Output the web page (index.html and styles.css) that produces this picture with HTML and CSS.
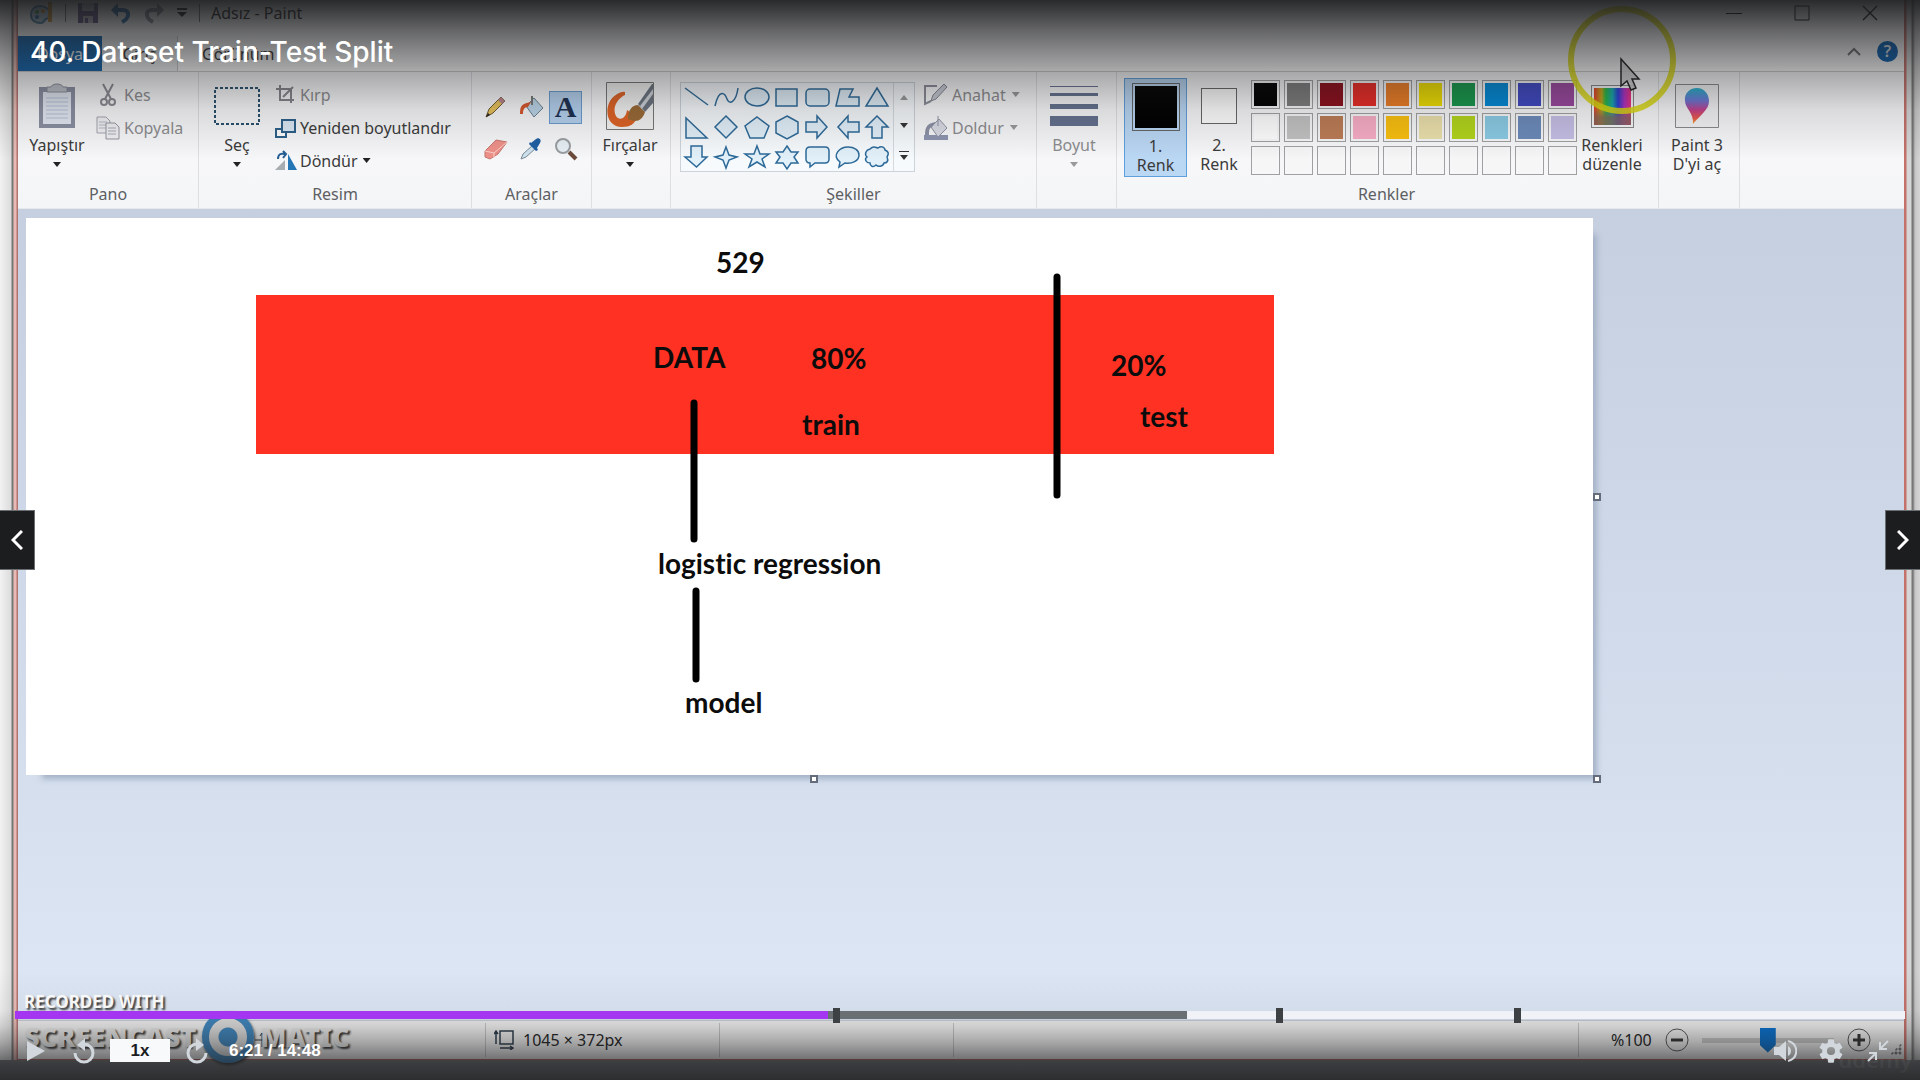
FILE: index.html
```html
<!DOCTYPE html>
<html lang="tr">
<head>
<meta charset="utf-8">
<title>40. Dataset Train-Test Split</title>
<link rel="stylesheet" href="styles.css">
</head>
<body>
<main class="player">
  <div class="edge edge-left"></div>
  <section class="window">
    <header class="titlebar">
      <svg class="app-icon" width="24" height="24" viewBox="0 0 24 24"><path d="M10 5C4 5 1 9 1 14s4 8 10 8c3 0 3-3 5-4s5-1 5-4-4-9-11-9z" fill="#b9d6ea" stroke="#4d86ab" stroke-width="2"/><circle cx="7" cy="11" r="2" fill="#3f9b4c"/><circle cx="13" cy="10" r="2" fill="#d38a2c"/><circle cx="7" cy="16" r="2" fill="#2b6fb0"/><path d="M20 1v20" stroke="#d99b3a" stroke-width="4"/></svg>
      <span class="bar-sep"></span>
      <button class="tool" aria-label="Kaydet"><svg width="22" height="22" viewBox="0 0 22 22"><path d="M1 1h20v20H1z" fill="#6a5a8e"/><path d="M5 1h12v8H5zM6 14h10v7H6z" fill="#c9c6d6"/><path d="M8 16h3v5H8z" fill="#6a5a8e"/></svg></button>
      <button class="tool" aria-label="Geri al"><svg width="22" height="22" viewBox="0 0 22 22"><path d="M4 8h9c7 0 7 8-1 12" fill="none" stroke="#2f73b5" stroke-width="4"/><path d="M1 8l7-7v14z" fill="#2f73b5"/></svg></button>
      <button class="tool" aria-label="Yinele"><svg width="22" height="22" viewBox="0 0 22 22"><path d="M18 8H9C2 8 2 16 10 20" fill="none" stroke="#8f949d" stroke-width="4"/><path d="M21 8l-7-7v14z" fill="#8f949d"/></svg></button>
      <button class="tool narrow" aria-label="Özelleştir"><svg width="12" height="10" viewBox="0 0 12 10"><path d="M1 1h10" stroke="#222" stroke-width="2"/><path d="M1 4h10L6 9z" fill="#222"/></svg></button>
      <span class="bar-sep"></span>
      <span class="app-title">Adsız - Paint</span>
      <div class="window-buttons">
        <button aria-label="Simge durumuna küçült"><svg width="16" height="16"><path d="M0 8.500h16" stroke="#111"/></svg></button>
        <button aria-label="Ekranı kapla"><svg width="16" height="16"><path d="M1 1h14v14H1z" fill="none" stroke="#111"/></svg></button>
        <button aria-label="Kapat"><svg width="16" height="16"><path d="M1 1l14 14M15 1L1 15" stroke="#111" stroke-width="1.300"/></svg></button>
      </div>
    </header>
    <nav class="tabs">
      <button class="tab file">Dosya</button>
      <button class="tab active">Giriş</button>
      <button class="tab">Görünüm</button>
      <div class="tab-tools">
        <button aria-label="Şeridi daralt"><svg width="14" height="10"><path d="M1 8l6-6 6 6" fill="none" stroke="#777" stroke-width="2"/></svg></button>
        <button class="help" aria-label="Yardım">?</button>
      </div>
    </nav>
    <div class="ribbon">
      <section class="group pano">
        <div class="group-body">
          <button class="big"><span class="pic"><svg width="38" height="46" viewBox="0 0 38 46"><path d="M1 4h36v41H1z" fill="#8b90a3"/><path d="M5 9h28v32H5z" fill="#e4e9f4"/><path d="M9 4h4c1-4 11-4 12 0h4v5H9z" fill="#c1c5ce" stroke="#8b8e99"/><path d="M8 15h22M8 19h22M8 23h22M8 27h22M8 31h22M8 35h22" stroke="#b9c4da"/></svg></span>Yapıştır<i class="arrow"></i></button>
          <div class="rows">
            <button class="row off"><svg width="24" height="24" viewBox="0 0 24 24"><path d="M7 1l8 15M17 1L9 16" stroke="#8b8b93" stroke-width="2"/><circle cx="8" cy="19" r="3" fill="none" stroke="#8b8b93" stroke-width="2"/><circle cx="16" cy="19" r="3" fill="none" stroke="#8b8b93" stroke-width="2"/></svg>Kes</button>
            <button class="row off"><svg width="24" height="24" viewBox="0 0 24 24"><path d="M1 1h9l4 4v12H1z" fill="#f2f2f5" stroke="#a3a5b0"/><path d="M3 6h8M3 9h8M3 12h8" stroke="#b7bac6"/><path d="M10 7h9l4 4v12H10z" fill="#f2f2f5" stroke="#94969f"/><path d="M12 12h8M12 15h8M12 18h8" stroke="#a7aab8"/></svg>Kopyala</button>
          </div>
        </div>
        <h2>Pano</h2>
      </section>
      <section class="group resim">
        <div class="group-body">
          <button class="big"><span class="pic"><svg width="48" height="40" viewBox="0 0 48 40"><path d="M2 2h44v36H2z" fill="none" stroke="#27506e" stroke-width="2" stroke-dasharray="3 2"/></svg></span>Seç<i class="arrow"></i></button>
          <div class="rows">
            <button class="row off"><svg width="22" height="22" viewBox="0 0 22 22"><path d="M5 1v15h14M1 5h15v14" fill="none" stroke="#85858b" stroke-width="2"/><path d="M8 13L18 3" stroke="#85858b" stroke-width="2"/></svg>Kırp</button>
            <button class="row"><svg width="22" height="22" viewBox="0 0 22 22"><path d="M1 12h10v8H1z" fill="#fff" stroke="#2c6089" stroke-width="2"/><path d="M7 3h13v12H7z" fill="#dceaf6" stroke="#2c6089" stroke-width="2"/></svg>Yeniden boyutlandır</button>
            <button class="row"><svg width="22" height="22" viewBox="0 0 22 22"><path d="M0 20l10-10v10z" fill="#a8adb2"/><path d="M13 4l9 16h-9z" fill="#2476b5"/><path d="M3 9c0-5 3-6 7-5M8 1l3 3-3 4" fill="none" stroke="#245f95" stroke-width="2"/></svg>Döndür<i class="arrow"></i></button>
          </div>
        </div>
        <h2>Resim</h2>
      </section>
      <section class="group araclar">
        <div class="tool-grid">
          <button aria-label="Kalem"><svg width="24" height="24" viewBox="0 0 24 24"><path d="M2 22l3-8L17 2l4 4L9 18z" fill="#e9c25a" stroke="#6d5930"/><path d="M17 2l4 4-3 3-4-4z" fill="#b9838a"/><path d="M2 22l2-4 2 2z" fill="#222"/></svg></button>
          <button aria-label="Renk doldur"><svg width="26" height="24" viewBox="0 0 26 24"><path d="M8 11l8-8 9 10-9 9z" fill="#bcd6ea" stroke="#6b7f90"/><path d="M2 19c0-8 1-10 11-12l-3 5c-4 0-5 3-5 7z" fill="#d9562c"/><path d="M14 1v9" stroke="#777" stroke-width="2"/></svg></button>
          <button class="picked" aria-label="Metin">A</button>
          <button aria-label="Silgi"><svg width="26" height="24" viewBox="0 0 26 24"><path d="M2 14L13 3l11 2-9 12-8 5-5-2z" fill="#ee9189" stroke="#c77771"/><path d="M2 14l9 2v5M11 16L24 5" stroke="#ffd0ca" fill="none"/></svg></button>
          <button aria-label="Renk seçici"><svg width="24" height="24" viewBox="0 0 24 24"><path d="M2 22l2-5L14 8l3 3-10 9z" fill="#cfe2ee" stroke="#788a97"/><path d="M12 6l5-4c3-2 6 1 4 4l-3 5 1 2-2 1-7-7 1-2z" fill="#1f5fa3"/></svg></button>
          <button aria-label="Büyüteç"><svg width="24" height="24" viewBox="0 0 24 24"><circle cx="9" cy="9" r="7" fill="#e7f0f5" stroke="#9a9ea2" stroke-width="2"/><path d="M15 15l7 7" stroke="#6b4a3a" stroke-width="4"/></svg></button>
        </div>
        <h2>Araçlar</h2>
      </section>
      <section class="group fircalar">
        <div class="group-body">
          <button class="big"><span class="pic"><svg width="48" height="48" viewBox="0 0 48 48"><path d="M.5.500h47v47H.5z" fill="#f4f4f4" stroke="#777"/><path d="M19 10c-4-1-12 3-16 11-5 13 2 24 13 24 8 0 13-3 15-10l-10-7c-1 9-8 11-11 6C5 24 14 15 19 13z" fill="#df6224"/><path d="M22 37c0-9 4-14 10-14l7 7c-3 9-9 11-17 7z" fill="#9a6a35"/><path d="M32 22L46 2h1v19l-8 9z" fill="#6c7480"/><path d="M34 24L47 7v5L36 27z" fill="#d0d5db"/></svg></span>Fırçalar<i class="arrow"></i></button>
        </div>
      </section>
      <section class="group sekiller">
        <div class="group-body">
          <div class="gallery">
            <svg class="shapes" width="212" height="88" viewBox="0 0 212 88" fill="#e2f0fa" stroke="#2d6a99" stroke-width="1.500">
              <path d="M4 5l23 17"/><path d="M34 23c4-18 10-13 12-7s9 4 11-11" fill="none"/><ellipse cx="76" cy="14" rx="12" ry="9"/><path d="M95 6h21v17H95z"/><rect x="125" y="6" width="23" height="17" rx="4"/><path d="M159 6h13l-4 8h10v9h-23z"/><path d="M196 5l11 18h-22z"/>
              <path d="M5 35v20h21z"/><path d="M45 33l11 11-11 11-11-11z"/><path d="M76 34l12 9-5 12H69l-5-12z"/><path d="M106 33l11 6v11l-11 6-11-6V39z"/><path d="M125 39h11v-6l10 11-10 11v-6h-11z"/><path d="M178 39h-11v-6l-10 11 10 11v-6h11z"/><path d="M196 33l11 11h-6v11h-10V44h-6z"/>
              <path d="M10 63h11v11h5L15.500 84 4 74h6z"/><path d="M45 64l3 8 8 2-8 3-3 8-3-8-8-3 8-2z"/><path d="M76 63l3 8h9l-7 5 3 8-8-5-8 5 3-8-7-5h9z"/><path d="M106 63l4 6h7l-4 5 4 6h-7l-4 6-4-6h-7l4-6-4-5h7z"/><path d="M129 64h15q4 0 4 4v8q0 4-4 4h-10l-5 4v-4q-4 0-4-4v-8q0-4 4-4z"/><path d="M159 79c-9-7 0-15 8-15 6 0 11 3 11 8 0 6-7 9-14 8l-6 4z"/><path d="M189 66c4-4 6-1 8-1 4-3 7 0 7 2 5 2 3 5 2 7 2 4 0 6-3 6-1 4-6 4-8 2-3 3-6 1-6-2-4 0-6-4-3-6-3-3-1-7 3-8z"/>
            </svg>
            <div class="gallery-scroll"><button class="dim" aria-label="Yukarı"><svg width="8" height="5"><path d="M0 5l4-5 4 5z"/></svg></button><button aria-label="Aşağı"><svg width="8" height="5"><path d="M0 0h8L4 5z"/></svg></button><button aria-label="Diğer"><svg width="10" height="9"><path d="M0 0h10v1H0zM1 4h8L5 9z"/></svg></button></div>
          </div>
          <div class="rows">
            <button class="row off"><svg width="24" height="24" viewBox="0 0 24 24"><path d="M13 3H1v18l6-3" fill="none" stroke="#8b8d99" stroke-width="2"/><path d="M7 18l2-6L20 1l3 3-11 12z" fill="#c9cbd6" stroke="#82848f"/></svg>Anahat<i class="arrow"></i></button>
            <button class="row off"><svg width="24" height="24" viewBox="0 0 24 24"><path d="M0 19h24v5H0z" fill="#8e95b0"/><path d="M7 11l8-8 8 9-9 9z" fill="#d9dbe5" stroke="#8f92a3"/><path d="M1 19C1 10 4 7 12 6l-4 5c-3 1-3 4-3 8z" fill="#8e92a6"/><path d="M14 0v10" stroke="#8f92a3"/></svg>Doldur<i class="arrow"></i></button>
          </div>
        </div>
        <h2>Şekiller</h2>
      </section>
      <section class="group boyut">
        <div class="group-body">
          <button class="big off"><span class="pic"><svg width="48" height="42"><path d="M0 1h48v1H0zM0 8h48v3H0zM0 19h48v5H0zM0 31h48v10H0z" fill="#64718f"/></svg></span>Boyut<i class="arrow"></i></button>
        </div>
      </section>
      <section class="group renkler">
        <div class="group-body">
          <button class="big selected"><span class="pic"><span class="ink ink-one"></span></span>1.<br>Renk</button>
          <button class="big second"><span class="pic"><span class="ink ink-two"></span></span>2.<br>Renk</button>
          <div class="palette">
            <button class="c-black" aria-label="Siyah"></button><button class="c-gray" aria-label="Gri"></button><button class="c-maroon" aria-label="Koyu kırmızı"></button><button class="c-red" aria-label="Kırmızı"></button><button class="c-orange" aria-label="Turuncu"></button><button class="c-yellow" aria-label="Sarı"></button><button class="c-green" aria-label="Yeşil"></button><button class="c-blue" aria-label="Turkuaz"></button><button class="c-indigo" aria-label="Çivit"></button><button class="c-purple" aria-label="Mor"></button>
            <button class="c-white" aria-label="Beyaz"></button><button class="c-silver" aria-label="Açık gri"></button><button class="c-brown" aria-label="Kahverengi"></button><button class="c-pink" aria-label="Gül"></button><button class="c-gold" aria-label="Altın"></button><button class="c-cream" aria-label="Açık sarı"></button><button class="c-lime" aria-label="Limon"></button><button class="c-sky" aria-label="Açık turkuaz"></button><button class="c-steel" aria-label="Mavi gri"></button><button class="c-lilac" aria-label="Lavanta"></button>
            <button aria-label="Boş 1"></button><button aria-label="Boş 2"></button><button aria-label="Boş 3"></button><button aria-label="Boş 4"></button><button aria-label="Boş 5"></button><button aria-label="Boş 6"></button><button aria-label="Boş 7"></button><button aria-label="Boş 8"></button><button aria-label="Boş 9"></button><button aria-label="Boş 10"></button>
          </div>
          <button class="big edit"><span class="pic"><span class="spectrum"></span></span>Renkleri<br>düzenle
            <svg class="pointer" width="110" height="110" viewBox="0 0 110 110"><circle cx="55" cy="55" r="51" fill="none" stroke="#dcd90c" stroke-opacity=".85" stroke-width="6"/><path d="M54 54v27l6-5 4 9 5-2-4-9h7z" fill="#c9c9cb" fill-opacity=".8" stroke="#222" stroke-width="1.500"/></svg>
          </button>
        </div>
        <h2>Renkler</h2>
      </section>
      <section class="group paint3d">
        <div class="group-body">
          <button class="big"><span class="pic"><svg width="44" height="44" viewBox="0 0 44 44"><defs><linearGradient id="drop" x1="0" y1="0" x2="0" y2="1"><stop offset="0" stop-color="#25b5cf"/><stop offset=".35" stop-color="#6d77d8"/><stop offset=".6" stop-color="#c33f8e"/><stop offset=".85" stop-color="#ee5a45"/><stop offset="1" stop-color="#f5a83a"/></linearGradient></defs><path d="M.5.500h43v43H.5z" fill="#f5f5f7" stroke="#8a8a8e"/><path d="M22 4c-8 0-13 6-12 13 0 7 9 12 8 23 7-9 16-14 16-23 0-7-5-13-12-13z" fill="url(#drop)"/></svg></span>Paint 3<br>D'yi aç</button>
        </div>
      </section>
    </div>
    <div class="workspace">
      <div class="canvas">
        <svg class="drawing" viewBox="0 0 1567 557">
          <path d="M230 77h1018v159H230z" fill="#ff3122"/>
          <g stroke="#000" stroke-width="7" stroke-linecap="round"><path d="M1031 59v218M668 185v136M670 373v88"/></g>
          <g class="notes"><text x="690" y="55">529</text><text x="627" y="150">DATA</text><text x="785" y="151">80%</text><text x="776" y="217">train</text><text x="1085" y="158">20%</text><text x="1114" y="209">test</text><text x="632" y="356">logistic regression</text><text x="659" y="495">model</text></g>
        </svg>
        <i class="handle handle-e"></i><i class="handle handle-s"></i><i class="handle handle-se"></i>
      </div>
    </div>
    <footer class="statusbar">
      <div class="cell cursor-pos"><svg width="16" height="16"><path d="M8 1v14M1 8h14M8 1L6 4M8 1l2 3" fill="none" stroke="#333"/></svg></div>
      <div class="cell"><svg width="20" height="20" viewBox="0 0 20 20"><path d="M6 1h13v13H6zM2 14V1M0 4l2-3 2 3M6 18h13M16 16l3 2-3 2" fill="none" stroke="#2b3b4a" stroke-width="1.500"/></svg>1045 × 372px</div>
      <div class="cell"></div>
      <div class="cell wide"></div>
      <div class="zoom"><label for="zoom">%100</label><button class="round" aria-label="Uzaklaştır"><svg width="24" height="24"><circle cx="12" cy="12" r="11" fill="none" stroke="#555"/><path d="M6 12h12" stroke="#333" stroke-width="3"/></svg></button><input id="zoom" class="zoom-range" type="range" min="0" max="100" value="50"><button class="round" aria-label="Yakınlaştır"><svg width="24" height="24"><circle cx="12" cy="12" r="11" fill="none" stroke="#555"/><path d="M6 12h12M12 6v12" stroke="#333" stroke-width="3"/></svg></button><span class="grip"></span></div>
    </footer>
  </section>
  <div class="edge edge-right"></div>

  <div class="watermark"><span>RECORDED WITH</span><div><b>SCREENCAST</b><i class="lens"></i><b>MATIC</b></div></div>
  <div class="brand">udemy</div>
  <div class="shade shade-top"></div>
  <div class="shade shade-bottom"></div>

  <h1 class="lecture">40. Dataset Train-Test Split</h1>
  <button class="jump jump-prev" aria-label="Önceki"><svg width="12" height="20"><path d="M11 1L2 10l9 9" fill="none" stroke="#fff" stroke-width="3"/></svg></button>
  <button class="jump jump-next" aria-label="Sonraki"><svg width="12" height="20"><path d="M1 1l9 9-9 9" fill="none" stroke="#fff" stroke-width="3"/></svg></button>
  <div class="transport">
    <div class="scrub"><input type="range" min="0" max="888" value="381" aria-label="İlerleme"><i class="mark mark-a"></i><i class="mark mark-b"></i><i class="mark mark-c"></i></div>
    <div class="controls">
      <button aria-label="Oynat"><svg width="20" height="24" viewBox="0 0 20 24"><path d="M1 2l18 10L1 22z"/></svg></button>
      <button aria-label="5 saniye geri"><svg width="22" height="26" viewBox="0 0 22 26"><path d="M2 15A9 9 0 1 0 11 6" fill="none" stroke="#d1d7dc" stroke-width="3"/><path d="M4 7l8-7v13z"/></svg></button>
      <button class="rate">1x</button>
      <button aria-label="5 saniye ileri"><svg width="22" height="26" viewBox="0 0 22 26"><path d="M20 15A9 9 0 1 1 11 6" fill="none" stroke="#d1d7dc" stroke-width="3"/><path d="M18 7l-8-7v13z"/></svg></button>
      <span class="time">6:21 / 14:48</span>
      <span class="spacer"></span>
      <button aria-label="Ses"><svg width="24" height="24" viewBox="0 0 24 24"><path d="M1 8h5l7-6v20l-7-6H1z"/><path d="M15 7c4 2 4 8 0 10z"/><path d="M15 2c11 3 11 17 0 20" fill="none" stroke="#d1d7dc" stroke-width="2"/></svg></button>
      <button class="gear" aria-label="Ayarlar"><svg width="28" height="28" viewBox="0 0 24 24"><path d="M19.430 12.980c.04-.32.07-.64.07-.98s-.03-.66-.07-.98l2.110-1.650c.19-.15.24-.42.12-.64l-2-3.460c-.12-.22-.39-.3-.61-.22l-2.490 1c-.52-.4-1.080-.73-1.690-.98l-.38-2.650C14.460 2.180 14.250 2 14 2h-4c-.25 0-.46.18-.49.42l-.38 2.650c-.61.25-1.170.59-1.690.98l-2.490-1c-.23-.09-.49 0-.61.22l-2 3.460c-.13.22-.07.49.12.64l2.110 1.650c-.04.32-.07.65-.07.980s.03.66.07.980l-2.110 1.650c-.19.15-.24.42-.12.640l2 3.460c.12.220.39.300.610.220l2.490-1c.52.400 1.080.730 1.690.980l.38 2.650c.03.240.24.420.49.420h4c.25 0 .46-.18.49-.42l.38-2.650c.61-.25 1.170-.59 1.690-.98l2.490 1c.23.090.49 0 .61-.22l2-3.460c.12-.22.07-.49-.12-.64zM12 15.500a3.500 3.500 0 1 1 0-7 3.500 3.500 0 0 1 0 7z"/></svg></button>
      <button aria-label="Tam ekrandan çık"><svg width="22" height="22" viewBox="0 0 22 22"><path d="M21 1l-8 8M13 2v7h7M1 21l8-8M2 13h7v7" fill="none" stroke="#d1d7dc" stroke-width="2"/></svg></button>
    </div>
  </div>
</main>
</body>
</html>
```
FILE: styles.css
```css
* { box-sizing: border-box; }
body { margin: 0; font-family: "Noto Sans", "Open Sans", sans-serif; font-size: 16px; color: #3b3b3b; }
button { margin: 0; padding: 0; border: 0; background: none; font: inherit; color: inherit; }
svg { display: block; flex: none; }
h1, h2 { margin: 0; font-weight: 400; }

.player { position: relative; display: grid; grid-template-columns: 18px 1fr 16px; min-height: 100vh; padding-bottom: 20px; background: #77797c; overflow: hidden; }
.edge-left { background: linear-gradient(90deg, #f2f2f2, #dcdcdc 11px, #777 12px, #777 13px, #e9bab3 14px, #e9bab3 16px, #b4736f 17px); }
.edge-right { background: linear-gradient(90deg, #c4716a 2px, #d5d5d5 3px, #d5d5d5 7px, #777 8px, #777 9px, #c6c6c6 11px, #d6d6d6); }

.window { display: flex; flex-direction: column; min-width: 0; border-bottom: 1px solid #b5605c; background: #f5f6f8; }

.titlebar { display: flex; align-items: center; height: 36px; padding: 0 0 10px 12px; background: #fff; }
.bar-sep { width: 1px; height: 18px; margin: 0 11px; background: #777; }
.tool { width: 33px; display: grid; place-items: start; }
.tool.narrow { width: 12px; }
.app-title { font-size: 16px; line-height: 24px; color: #222; }
.window-buttons { display: flex; margin-left: auto; }
.window-buttons button { display: grid; place-items: center; width: 68px; height: 26px; }

.tabs { display: flex; height: 36px; background: #fff; border-bottom: 1px solid #cfcfcf; }
.tab { padding: 0 24px; color: #333; }
.tab.file { width: 84px; padding: 0; background: #1466b0; color: #fff; }
.tab.active { width: 76px; padding: 0; border-right: 1px solid #ccc; background: #f5f6f7; }
.tab-tools { display: flex; align-items: center; gap: 16px; margin: 0 6px 4px auto; }
.help { width: 21px; height: 21px; border-radius: 50%; background: #0d63b4; color: #e6eef8; font-weight: 600; line-height: 21px; }

.ribbon { display: flex; height: 137px; background: linear-gradient(#fbfbfc, #f4f5f7); border-bottom: 1px solid #e6e8ec; }
.group { display: flex; flex-direction: column; justify-content: space-between; padding: 6px 0 3px; border-right: 1px solid #dedfe3; flex: none; }
.group h2 { font-size: 16px; line-height: 22px; text-align: center; color: #5d5f63; }
.group-body { display: flex; align-items: flex-start; }
.big { padding-top: 4px; line-height: 19px; text-align: center; }
.pic { display: flex; align-items: center; justify-content: center; height: 48px; margin-bottom: 6px; }
.arrow { display: block; width: 8px; height: 5px; margin: 7px auto 0; background: #222; clip-path: polygon(0 0, 100% 0, 50% 100%); }
.off .arrow { background: #999; }
.off { color: #8c8c8f; }
.row { display: flex; align-items: center; gap: 4px; height: 33px; white-space: nowrap; }
.row .arrow { margin: 0 0 0 2px; }
.pano { width: 181px; }
.pano .big { width: 78px; }
.resim { width: 273px; }
.resim .big { width: 76px; }
.resim .row { gap: 3px; }
.araclar { width: 120px; }
.tool-grid { display: grid; grid-template-columns: repeat(3, 35px); justify-content: center; padding: 8px 0 0; }
.tool-grid button { display: grid; place-items: center; width: 33px; height: 42px; }
.tool-grid .picked { height: 33px; align-self: center; border: 1px solid #6a9cd0; background: #b5d2f0; color: #1c2f4f; font: bold 30px/30px "Liberation Serif", serif; }
.fircalar { width: 79px; }
.fircalar .big { width: 76px; }
.sekiller { width: 366px; }
.sekiller .group-body { gap: 9px; padding-left: 9px; }
.gallery { display: flex; width: 235px; height: 90px; margin-top: 4px; border: 1px solid #cdd3da; background: #f7fafd; }
.gallery-scroll { flex: 1; display: grid; border-left: 1px solid #d6dade; fill: #333; }
.gallery-scroll button { display: grid; place-items: center; }
.gallery-scroll .dim { fill: #999; }
.boyut { width: 80px; }
.boyut .big { width: 74px; }
.renkler { width: 542px; }
.renkler .group-body { padding-left: 7px; }
.renkler h2 { padding-right: 2px; }
.selected { width: 63px; height: 99px; border: 1px solid #5f9fdc; background: #bad7f4; padding-top: 2px; }
.second { width: 64px; }
.ink { border: 1px solid #666; }
.ink-one { width: 48px; height: 48px; padding: 2px; background: #000 content-box; }
.ink-two { width: 36px; height: 36px; background: #fff; }
.palette { display: grid; grid-template-columns: repeat(10, 29px); grid-auto-rows: 29px; gap: 4px; padding-top: 2px; }
.palette button { padding: 2px; border: 1px solid #a0a0a0; background-color: #f6f6f6; background-clip: content-box; }
.palette .c-black { background-color: #000; }
.palette .c-gray { background-color: #7d7d7d; }
.palette .c-maroon { background-color: #8c0d1b; }
.palette .c-red { background-color: #eb2a24; }
.palette .c-orange { background-color: #ee7d24; }
.palette .c-yellow { background-color: #f0df00; }
.palette .c-green { background-color: #16984a; }
.palette .c-blue { background-color: #008ad8; }
.palette .c-indigo { background-color: #3f48c4; }
.palette .c-purple { background-color: #9b479f; }
.palette .c-white { background-color: #fff; }
.palette .c-silver { background-color: #c2c2c2; }
.palette .c-brown { background-color: #bd7c55; }
.palette .c-pink { background-color: #f8adc5; }
.palette .c-gold { background-color: #fbc00d; }
.palette .c-cream { background-color: #ebe0ab; }
.palette .c-lime { background-color: #b2d51a; }
.palette .c-sky { background-color: #8acbe5; }
.palette .c-steel { background-color: #6b8aba; }
.palette .c-lilac { background-color: #c6bfe6; }
.edit { position: relative; width: 70px; }
.spectrum { width: 43px; height: 43px; padding: 2px; border: 1px solid #888; background: linear-gradient(transparent 55%, #84635acc 80%) content-box, linear-gradient(90deg, #e33b2b, #c1a417 20%, #25b845 32%, #16a7ad 50%, #293ed7 65%, #b02fc4 82%, #ef2f7c) content-box; }
.pointer { position: absolute; left: -10px; top: -73px; z-index: 1; }
.paint3d { width: 81px; }
.paint3d .big { width: 76px; }

.workspace { flex: 1; padding: 9px 8px 240px; background: linear-gradient(#c6cfe0, #d3ddec 65%, #dde7f5); }
.canvas { position: relative; width: 84%; max-width: 1567px; background: #fff; box-shadow: 10px 10px 6px -6px #a3b1c6; }
.drawing { width: 100%; height: auto; }
.notes { font: bold 28px "Lato", "Open Sans", sans-serif; font-variant-ligatures: none; fill: #0c0c0c; }
.handle { position: absolute; width: 8px; height: 8px; border: 2px solid #646b7b; background: #fff; }
.handle-e { right: -8px; top: calc(50% - 4px); }
.handle-s { bottom: -8px; left: 50%; }
.handle-se { right: -8px; bottom: -8px; }

.statusbar { display: flex; height: 39px; padding: 2px 0; border-top: 1px solid #c9ced8; background: #f1f1f1; color: #222; }
.cell { display: flex; align-items: center; gap: 9px; width: 234px; padding-left: 8px; border-right: 1px solid #c4c4c4; white-space: nowrap; }
.cell.cursor-pos { width: 468px; padding-left: 236px; }
.cell.wide { flex: 1; }
.zoom { display: flex; align-items: center; width: 325px; padding-left: 32px; }
.round { margin: 0 13px; }
.zoom-range { appearance: none; width: 132px; height: 25px; margin: 0; background: linear-gradient(#c9c9c9, #c9c9c9) center / 100% 5px no-repeat; }
.zoom-range::-webkit-slider-thumb { appearance: none; width: 16px; height: 25px; background: #0870ce; clip-path: polygon(0 0, 100% 0, 100% 70%, 50% 100%, 0 70%); }
.grip { width: 12px; height: 12px; margin: 18px 0 0 6px; background: radial-gradient(circle, #777 1px, transparent 2px) 0 0 / 4px 4px; clip-path: polygon(100% 0, 100% 100%, 0 100%); }

.watermark { position: absolute; left: 24px; bottom: 17px; color: #fff; text-shadow: 2px 2px 2px #333; font-weight: 700; }
.watermark span { display: block; font-size: 17px; line-height: 18px; }
.watermark div { display: flex; align-items: center; height: 52px; font-size: 27px; line-height: 36px; color: #e8e8e8; }
.lens { width: 52px; height: 52px; margin: 0 6px; border: 7px solid #3f86bd; border-radius: 50%; background: radial-gradient(circle, #3f86bd 9px, #ddd 10px); box-shadow: 1px 2px 3px #333; }
.brand { position: absolute; right: 8px; bottom: 8px; font-size: 22px; line-height: 26px; font-weight: 600; color: #ffffff33; }

.shade { position: absolute; left: 0; right: 0; pointer-events: none; z-index: 2; }
.shade-top { top: 0; height: 160px; background: linear-gradient(#1c1d1ff0, #1c1d1faa 32px, #1c1d1f66 68px, #1c1d1f24 110px, #1c1d1f00); }
.shade-bottom { bottom: 0; height: 110px; background: linear-gradient(#1c1d1f00, #1c1d1f0c 40px, #1c1d1f28 56px, #1c1d1f58 72px, #1c1d1f98 89px, #1c1d1faa 94px, #1c1d1fd0); }

.lecture { position: absolute; left: 30px; top: 34px; z-index: 3; color: #fff; font: 500 28px/36px "Inter", "Roboto", sans-serif; }
.jump { position: absolute; top: calc(50% - 30px); z-index: 3; display: grid; place-items: center; width: 35px; height: 60px; background: #1c1d1f; border: 1px solid #6a6f73; }
.jump-prev { left: 0; border-left: 0; }
.jump-next { right: 0; border-right: 0; }

.transport { position: absolute; left: 15px; right: 15px; bottom: 0; z-index: 3; }
.scrub { position: relative; height: 8px; }
.scrub input { display: block; appearance: none; width: 100%; height: 8px; margin: 0; background: linear-gradient(90deg, #a435f0 43%, #6a6f73 43%, #6a6f73 62%, #f0f2f7 62%); }
.scrub input::-webkit-slider-thumb { appearance: none; width: 1px; height: 1px; opacity: 0; }
.mark { position: absolute; top: -3px; width: 7px; height: 15px; background: #3e4143; }
.mark-a { left: 43.300%; }
.mark-b { left: 66.700%; }
.mark-c { left: 79.300%; }
.controls { display: flex; align-items: center; height: 61px; padding: 2px 16px 0 11px; fill: #d1d7dc; }
.controls button { margin-right: 27px; }
.controls .rate { width: 60px; height: 23px; margin: 0 16px 0 -12px; background: #f7f9fa; color: #1c1d1f; font: bold 17px/23px "Liberation Sans", sans-serif; }
.controls .rate + button { margin-right: 21px; }
.time { color: #fff; font: bold 17px/24px "Liberation Sans", sans-serif; }
.spacer { flex: 1; }
.controls .gear { margin: 0 22px 0 -7px; }
.controls button:last-child { margin-right: 0; }
```
